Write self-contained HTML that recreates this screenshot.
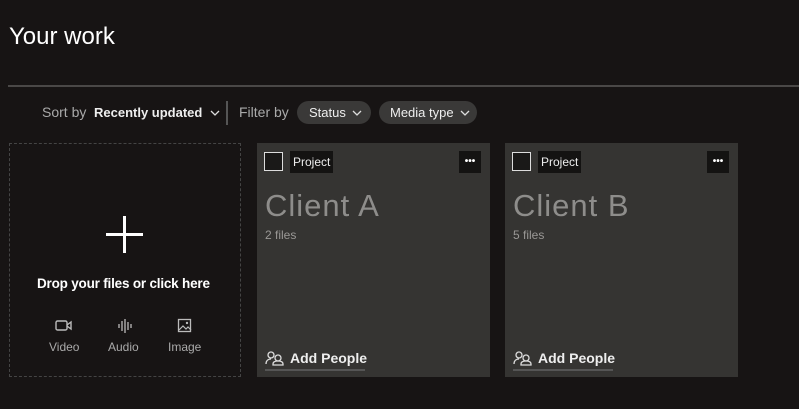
<!DOCTYPE html>
<html><head><style>
body{margin:0;width:799px;height:409px;background:#171414;font-family:"Liberation Sans",sans-serif;color:#fff;position:relative;overflow:hidden}
.a{position:absolute}
.pill{position:absolute;top:101px;height:23px;border-radius:12px;background:#3a3938;font-size:13px;line-height:23px;color:#eee}
.card{position:absolute;top:143px;width:233px;height:234px;background:#353432}
.chk{position:absolute;left:7px;top:9px;width:17px;height:17px;border:1.5px solid #ddd;background:#1a1918}
.proj{position:absolute;left:33px;top:8px;height:22px;padding:0 3px;background:#141312;font-size:12px;line-height:22px;color:#eee}
.more{position:absolute;right:9px;top:8px;width:22px;height:22px;background:#141312;color:#fff;font-size:10px;text-align:center;line-height:22px;font-weight:bold}
.ttl{position:absolute;left:8px;top:45px;font-size:31px;letter-spacing:1px;color:#8e8d8b}
.files{position:absolute;left:8px;top:85px;font-size:12px;color:#9a9896}
.add{position:absolute;left:8px;top:207px;width:100px;height:19px;border-bottom:2px solid #555;font-size:14px;font-weight:bold;color:#eee;white-space:nowrap}
.ico{color:#aaa;text-align:center;position:absolute;top:340px;font-size:12px}
.chev{display:inline-block;vertical-align:1px;margin-left:6px}
</style></head><body>
<div class="a" style="left:9px;top:23px;font-size:24px">Your work</div>
<div class="a" style="left:8px;top:85px;width:791px;height:2px;background:#4a4847"></div>
<div class="a" style="left:42px;top:104px;font-size:14px;color:#aaa">Sort by</div>
<div class="a" style="left:94px;top:105px;font-size:13px;font-weight:bold;color:#eee">Recently updated<svg class="chev" style="margin-left:8px" width="10" height="6"><path d="M1 1l4 4 4-4" fill="none" stroke="#ddd" stroke-width="1.3"/></svg></div>
<div class="a" style="left:226px;top:101px;width:2px;height:24px;background:#555"></div>
<div class="a" style="left:239px;top:104px;font-size:14px;color:#aaa">Filter by</div>
<div class="pill" style="left:297px;width:74px;padding-left:12px;box-sizing:border-box">Status<svg class="chev" width="10" height="6"><path d="M1 1l4 4 4-4" fill="none" stroke="#ddd" stroke-width="1.3"/></svg></div>
<div class="pill" style="left:379px;width:98px;padding-left:11px;box-sizing:border-box">Media type<svg class="chev" width="10" height="6"><path d="M1 1l4 4 4-4" fill="none" stroke="#ddd" stroke-width="1.3"/></svg></div>
<div class="a" style="left:9px;top:143px;width:230px;height:232px;border:1px dashed #444"></div>
<div class="a" style="left:106px;top:233px;width:37px;height:3px;background:#fff"></div>
<div class="a" style="left:123px;top:216px;width:3px;height:37px;background:#fff"></div>
<div class="a" style="left:37px;top:276px;font-size:13.5px;font-weight:bold;letter-spacing:-0.2px">Drop your files or click here</div>
<svg class="a" style="left:55px;top:318px" width="18" height="14"><rect x="1" y="3" width="11" height="9" rx="1.5" fill="none" stroke="#bbb" stroke-width="1.4"/><path d="M12 7l4-3v7l-4-3" fill="none" stroke="#bbb" stroke-width="1.4"/></svg>
<svg class="a" style="left:117px;top:318px" width="16" height="16"><path d="M2 6v4M5 3v10M8 1v14M11 4v8M14 6v4" stroke="#bbb" stroke-width="1.3"/></svg>
<svg class="a" style="left:177px;top:318px" width="16" height="16"><rect x="1.5" y="1.5" width="12" height="12" fill="none" stroke="#bbb" stroke-width="1.3"/><path d="M2 12l4-4 3 3 2-2 3 3" fill="none" stroke="#bbb" stroke-width="1.2"/><circle cx="10" cy="5" r="1.2" fill="#bbb"/></svg>
<div class="ico" style="left:49px">Video</div>
<div class="ico" style="left:108px">Audio</div>
<div class="ico" style="left:168px">Image</div>
<div class="card" style="left:257px"><div class="chk"></div><div class="proj">Project</div><div class="more">•••</div><div class="ttl">Client A</div><div class="files">2 files</div><div class="add"><svg width="20" height="16" style="vertical-align:-3px;margin-right:5px"><circle cx="6" cy="5" r="3" fill="none" stroke="#ddd" stroke-width="1.3"/><path d="M1 14c0-4 3-5 5-5" fill="none" stroke="#ddd" stroke-width="1.3"/><circle cx="13" cy="8" r="3" fill="none" stroke="#ddd" stroke-width="1.3"/><path d="M8 15v-1c0-2 2-3 5-3s5 1 5 3v1z" fill="none" stroke="#ddd" stroke-width="1.3"/></svg>Add People</div></div>
<div class="card" style="left:505px"><div class="chk"></div><div class="proj">Project</div><div class="more">•••</div><div class="ttl">Client B</div><div class="files">5 files</div><div class="add"><svg width="20" height="16" style="vertical-align:-3px;margin-right:5px"><circle cx="6" cy="5" r="3" fill="none" stroke="#ddd" stroke-width="1.3"/><path d="M1 14c0-4 3-5 5-5" fill="none" stroke="#ddd" stroke-width="1.3"/><circle cx="13" cy="8" r="3" fill="none" stroke="#ddd" stroke-width="1.3"/><path d="M8 15v-1c0-2 2-3 5-3s5 1 5 3v1z" fill="none" stroke="#ddd" stroke-width="1.3"/></svg>Add People</div></div>
</body></html>
